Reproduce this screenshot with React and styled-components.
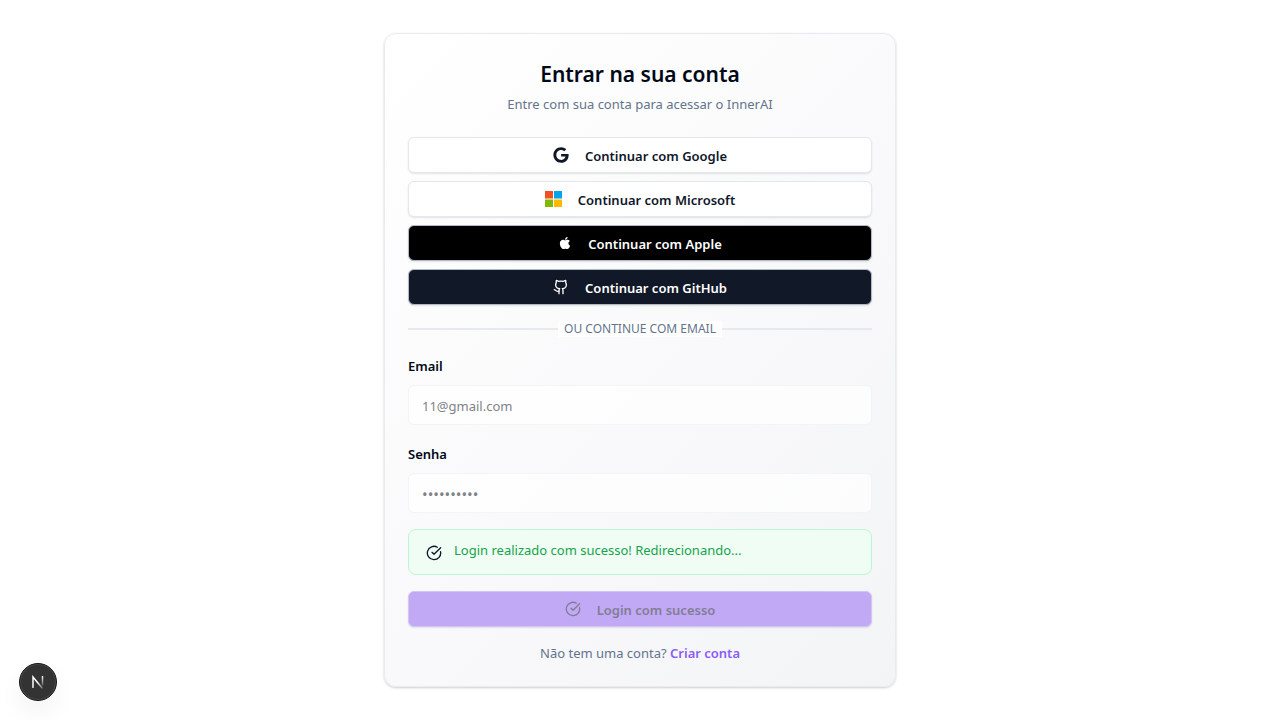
import React from "react";
import styled, { createGlobalStyle, css } from "styled-components";
import { CircleCheckBig, Github } from "lucide-react";
import { FaGoogle, FaApple } from "react-icons/fa";

const GlobalStyle = createGlobalStyle`
  *, *::before, *::after { box-sizing: border-box; }
  body {
    margin: 0;
    background: #fff;
    color: #020817;
    font-family: "Segoe UI", "Noto Sans", "Open Sans", sans-serif;
    font-size: 13px;
    line-height: 20px;
  }
  button, input { font: inherit; }
`;

const Page = styled.main`
  min-height: 100vh;
  display: flex;
  align-items: center;
  justify-content: center;
  padding: 16px;
`;

const Card = styled.section`
  width: 100%;
  max-width: 512px;
  padding: 23px;
  display: flex;
  flex-direction: column;
  gap: 16px;
  border: 1px solid #e9ebee;
  border-radius: 12px;
  background: linear-gradient(135deg, #ffffff, #f3f4f6);
  box-shadow: 0 1px 3px rgba(0, 0, 0, 0.1), 0 1px 2px rgba(0, 0, 0, 0.1);
`;

const Header = styled.header`
  display: flex;
  flex-direction: column;
  gap: 3px;
  padding-bottom: 7px;
  text-align: center;
`;

const Title = styled.h1`
  margin: 0;
  font-size: 21px;
  line-height: 34px;
  font-weight: 600;
`;

const Subtitle = styled.p`
  margin: 0;
  color: #64748b;
`;

const Providers = styled.div`
  display: flex;
  flex-direction: column;
  gap: 8px;
`;

const variants = {
  light: css`background: #fff; color: #0f172a; border-color: #e2e8f0;`,
  black: css`background: #000; color: #fff; border-color: #b4bac4;`,
  navy: css`background: #111827; color: #fff; border-color: #b4bac4;`,
  violet: css`background: #c1a9f6; color: #827d94; border-color: #d2c4f7;`,
};

const Button = styled.button`
  display: flex;
  align-items: center;
  justify-content: center;
  gap: 16px;
  width: 100%;
  height: 36px;
  padding: 2px 16px 0;
  border: 1px solid;
  border-radius: 6px;
  font-weight: 600;
  box-shadow: 0 1px 2px rgba(0, 0, 0, 0.1);
  ${(p) => variants[p.$variant]}
  svg { margin-bottom: 2px; }
`;

const Divider = styled.div`
  display: flex;
  align-items: center;
  font-size: 12px;
  line-height: 16px;
  color: #64748b;
  text-transform: uppercase;
  &::before, &::after {
    content: "";
    flex: 1;
    height: 2px;
    background: #e6eaee;
  }
`;

const DividerLabel = styled.span`
  padding: 0 6px;
  background: #fff;
`;

const Form = styled.form`
  display: flex;
  flex-direction: column;
  gap: 16px;
`;

const Field = styled.div`
  display: flex;
  flex-direction: column;
  gap: 6px;
`;

const Label = styled.label`
  font-weight: 600;
  line-height: 26px;
`;

const Input = styled.input`
  width: 100%;
  height: 40px;
  padding: 2px 13px 0;
  border: 1px solid #f2f4f7;
  border-radius: 6px;
  background: rgba(255, 255, 255, 0.7);
  color: #808289;
  &[type="password"] { font-size: 15px; }
`;

const Alert = styled.div`
  display: flex;
  gap: 12px;
  padding: 10px 17px 13px;
  border: 1px solid #bbf7d0;
  border-radius: 8px;
  background: #f0fdf4;
  color: #16a34a;
`;

const AlertIcon = styled(CircleCheckBig)`
  margin-top: 5px;
  color: #0f172a;
`;

const Footer = styled.p`
  margin: 0;
  text-align: center;
  color: #64748b;
`;

const SignUp = styled.a`
  color: #8b5cf6;
  font-weight: 600;
  text-decoration: none;
`;

const DevBadge = styled.button`
  position: fixed;
  left: 19px;
  bottom: 19px;
  width: 38px;
  height: 38px;
  padding: 0;
  display: grid;
  place-items: center;
  border: 1px solid #181818;
  border-radius: 50%;
  background: #333;
  box-shadow: inset 0 0 0 1px #484848, 0 12px 24px rgba(0, 0, 0, 0.05);
`;

const MicrosoftLogo = () => (
  <svg width="17" height="16" viewBox="0 0 17 16" aria-hidden="true">
    <path fill="#f25022" d="M0 0h8v7.5H0z" />
    <path fill="#00a4ef" d="M9 0h8v7.5H9z" />
    <path fill="#7fba00" d="M0 8.5h8V16H0z" />
    <path fill="#ffb900" d="M9 8.5h8V16H9z" />
  </svg>
);

const NextLogo = () => (
  <svg width="14" height="14" viewBox="0 0 14 14" fill="none" aria-hidden="true">
    <defs>
      <linearGradient id="stem" x1="0" y1="1" x2="0" y2="13" gradientUnits="userSpaceOnUse">
        <stop stopColor="#fff" />
        <stop offset="0.9" stopColor="#fff" stopOpacity="0.1" />
      </linearGradient>
      <linearGradient id="slash" x1="7" y1="7" x2="12" y2="14" gradientUnits="userSpaceOnUse">
        <stop stopColor="#fff" />
        <stop offset="1" stopColor="#fff" stopOpacity="0.2" />
      </linearGradient>
    </defs>
    <path d="M2 13V2L11.5 13.5" stroke="url(#slash)" strokeWidth="1.5" />
    <path d="M11.5 1v9.5" stroke="url(#stem)" strokeWidth="1.5" />
  </svg>
);

export default function App() {
  return (
    <>
      <GlobalStyle />
      <Page>
        <Card>
          <Header>
            <Title>Entrar na sua conta</Title>
            <Subtitle>Entre com sua conta para acessar o InnerAI</Subtitle>
          </Header>
          <Providers>
            <Button type="button" $variant="light"><FaGoogle size={16} />Continuar com Google</Button>
            <Button type="button" $variant="light"><MicrosoftLogo />Continuar com Microsoft</Button>
            <Button type="button" $variant="black"><FaApple size={14} />Continuar com Apple</Button>
            <Button type="button" $variant="navy"><Github size={16} />Continuar com GitHub</Button>
          </Providers>
          <Divider><DividerLabel>Ou continue com email</DividerLabel></Divider>
          <Form>
            <Field>
              <Label htmlFor="email">Email</Label>
              <Input id="email" type="email" defaultValue="11@gmail.com" disabled />
            </Field>
            <Field>
              <Label htmlFor="password">Senha</Label>
              <Input id="password" type="password" defaultValue="abcdefghij" disabled />
            </Field>
            <Alert role="status">
              <AlertIcon size={16} />
              <span>Login realizado com sucesso! Redirecionando...</span>
            </Alert>
            <Button type="submit" $variant="violet" disabled><CircleCheckBig size={16} />Login com sucesso</Button>
          </Form>
          <Footer>Não tem uma conta? <SignUp href="#signup">Criar conta</SignUp></Footer>
        </Card>
      </Page>
      <DevBadge type="button" aria-label="Next.js"><NextLogo /></DevBadge>
    </>
  );
}
